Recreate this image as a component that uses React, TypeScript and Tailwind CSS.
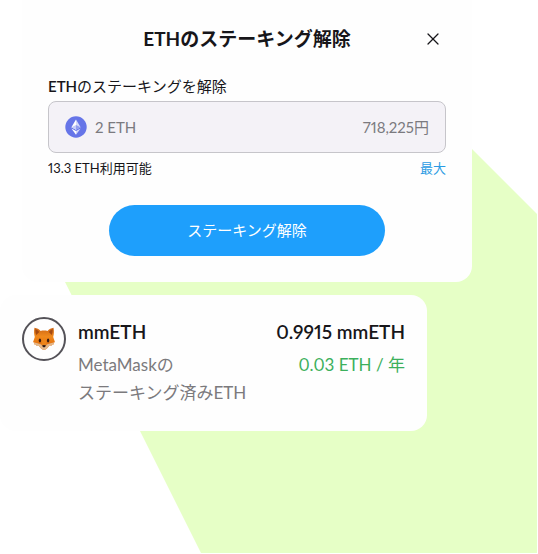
import { X } from 'lucide-react';

function EthIcon() {
  return (
    <svg viewBox="0 0 22 22" className="size-[22px] shrink-0" aria-hidden="true">
      <circle cx="11" cy="11" r="10.7" fill="#6675e8" />
      <path d="M11 3.4 6.4 11.2 11 13.8Z" fill="#fff" />
      <path d="M11 3.4 15.6 11.2 11 13.8Z" fill="#d5daf9" />
      <path d="M11 8.9 6.4 11.2 11 13.8Z" fill="#c5ccf7" />
      <path d="M11 8.9 15.6 11.2 11 13.8Z" fill="#929def" />
      <path d="M6.4 12.4 11 15.1V18.8Z" fill="#fff" />
      <path d="M15.6 12.4 11 15.1V18.8Z" fill="#d5daf9" />
    </svg>
  );
}

function FoxIcon() {
  return (
    <svg viewBox="0 0 24 24" className="size-6" aria-hidden="true">
      <defs>
        <linearGradient id="fur" x1="0" y1="0" x2="0" y2="1">
          <stop offset="0" stopColor="#cf6614" />
          <stop offset="0.4" stopColor="#f08a1c" />
          <stop offset="1" stopColor="#dc620a" />
        </linearGradient>
      </defs>
      <path
        d="M2.500 .8C4.800 1.100 7.200 2.300 8.600 4 10.800 3.400 13.400 3.400 15.500 4 17 2.300 19.300 1.100 21.500 .8 22.200 4 22 7.300 21.200 10.100L23 15.300 21.600 15.600 21.600 17.400 19.800 17.400 19.300 19 16.900 18.900C15.600 21 13.900 22.800 12 22.800S8.400 21 7.100 18.900L4.700 19 4.200 17.400 2.400 17.400 2.400 15.600 1 15.300 2.800 10.100C2 7.300 1.800 4 2.500 .8Z"
        fill="url(#fur)"
      />
      <path d="M3.400 2C5.200 2.800 6.600 3.900 7.300 5.100L4.200 8C3.500 6.200 3.300 4.200 3.400 2ZM20.600 2C18.800 2.800 17.400 3.900 16.700 5.100L19.800 8C20.500 6.200 20.700 4.200 20.600 2Z" fill="#a34a12" />
      <path d="M1 15.300 4.600 16 8.500 17.300 12 19 15.500 17.300 19.400 16 23 15.300 21.600 15.600 21.600 17.400 19.800 17.400 19.300 19 16.900 18.900C15.600 21 13.900 22.800 12 22.800S8.400 21 7.100 18.900L4.700 19 4.200 17.400 2.400 17.400 2.400 15.600Z" fill="#e3b88c" />
      <path d="M10 13 12 10.500 14 13 14.500 18.500H9.500Z" fill="#ec8419" />
      <ellipse cx="7.900" cy="13.500" rx="1.200" ry="1.900" fill="#3b1c10" />
      <ellipse cx="16.100" cy="13.500" rx="1.200" ry="1.900" fill="#3b1c10" />
      <path d="M10 18.600Q12 17.600 14 18.600 13.500 20.300 12 20.600 10.500 20.300 10 18.600Z" fill="#2a1715" />
    </svg>
  );
}

function Backdrop() {
  return (
    <svg
      viewBox="0 0 538 554"
      preserveAspectRatio="none"
      className="absolute inset-0 -z-10 h-full w-full"
      aria-hidden="true"
    >
      <path d="M65 149H472L537 214V553H201L140 431 65 282Z" fill="#e6ffc6" />
    </svg>
  );
}

function UnstakeCard() {
  return (
    <form
      className="mr-[66px] ml-[22px] rounded-b-2xl bg-[#fefefe] px-[26px] pt-6 pb-[26px]"
      onSubmit={(event) => event.preventDefault()}
    >
      <header className="grid grid-cols-[26px_1fr_26px] items-center">
        <h1 className="col-start-2 text-center text-[19px] leading-[30px] font-bold">ETHのステーキング解除</h1>
        <button type="button" aria-label="閉じる" className="flex size-[26px] items-center justify-center">
          <X className="size-5" strokeWidth={1.5} />
        </button>
      </header>

      <label htmlFor="amount" className="mt-5 block text-[15px] leading-6">
        <span className="font-semibold">ETH</span>のステーキングを解除
      </label>
      <div className="mt-[3px] flex h-[52px] items-center gap-2 rounded-lg border border-[#c6c5ca] bg-[#f4f2f7] px-4 text-[15px] text-[#7b7a7f]">
        <EthIcon />
        <input id="amount" type="text" defaultValue="2 ETH" className="min-w-0 flex-1 bg-transparent outline-none" />
        <output htmlFor="amount">718,225円</output>
      </div>
      <div className="mt-[3px] flex items-center justify-between text-[13px] leading-6">
        <span>13.3 ETH利用可能</span>
        <button type="button" className="text-[#2a9be3]">最大</button>
      </div>

      <div className="mt-[25px] flex justify-center">
        <button type="submit" className="h-[51px] w-[276px] rounded-full bg-[#1e9ffc] text-[15px] text-white">
          ステーキング解除
        </button>
      </div>
    </form>
  );
}

function PositionCard() {
  return (
    <section className="mt-[13px] mr-[111px] flex gap-3 rounded-2xl bg-[#fefefe] pt-[22px] pr-[22px] pb-6 pl-[22px]">
      <div className="flex size-11 shrink-0 items-center justify-center rounded-full border-2 border-[#545258]">
        <FoxIcon />
      </div>
      <div className="flex flex-1 justify-between">
        <div>
          <h2 className="mb-1 text-[19px] leading-[30px] font-semibold">mmETH</h2>
          <p className="text-[17px] leading-7 text-[#7b7a7d]">
            MetaMaskの
            <br />
            ステーキング済みETH
          </p>
        </div>
        <div className="text-right">
          <p className="mb-1 text-[19px] leading-[30px] font-semibold">0.9915 mmETH</p>
          <p className="text-[17px] leading-7 text-[#3cb05c]">0.03 ETH / 年</p>
        </div>
      </div>
    </section>
  );
}

export default function App() {
  return (
    <main
      lang="ja"
      className="relative isolate min-h-screen bg-white font-['Lato','Noto_Sans_CJK_JP',sans-serif] text-[#17161a] proportional-nums"
    >
      <Backdrop />
      <UnstakeCard />
      <PositionCard />
    </main>
  );
}
